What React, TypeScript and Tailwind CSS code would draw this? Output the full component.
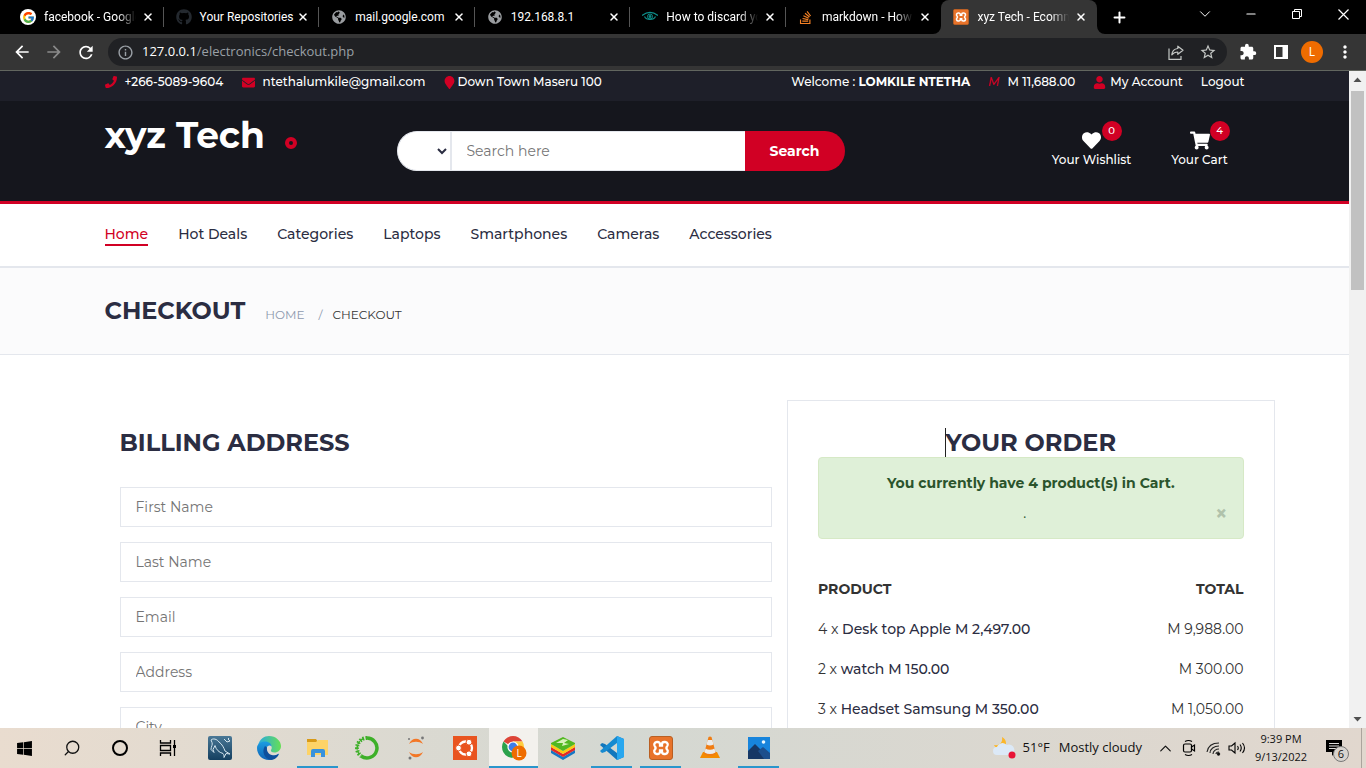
import React from "react";
import {
  FaEnvelope,
  FaGithub,
  FaGlobeAmericas,
  FaHeart,
  FaMapMarker,
  FaPhone,
  FaShoppingCart,
  FaStackOverflow,
  FaUser,
  FaWindows,
} from "react-icons/fa";
import { FcGoogle } from "react-icons/fc";
import { MdArrowBack, MdArrowForward, MdExtension, MdMoreVert, MdOutlineInfo, MdRefresh, MdStarBorder } from "react-icons/md";
import { ChevronDown, ChevronUp, Minus, Plus, Search, X } from "lucide-react";

function Xampp({ size }: { size: number }) {
  return (
    <svg width={size} height={size} viewBox="0 0 24 24" aria-hidden="true">
      <rect x="0.5" y="0.5" width="23" height="23" rx="2.5" fill="#e8732a" stroke="#b95f22" />
      <path
        d="M7.800 6h.9A2.300 2.300 0 0 1 11 8.300v1.200h2V8.300A2.300 2.300 0 0 1 15.300 6h.9a2.700 2.700 0 0 1 1.800 4.600 1.900 1.900 0 0 0 0 2.800 2.700 2.700 0 0 1-1.800 4.600h-.9a2.300 2.300 0 0 1-2.300-2.300v-1.200h-2v1.200A2.300 2.300 0 0 1 8.700 18h-.9A2.700 2.700 0 0 1 6 13.400a1.900 1.900 0 0 0 0-2.800A2.700 2.700 0 0 1 7.800 6Z"
        fill="none"
        stroke="#fff"
        strokeWidth="2.300"
      />
    </svg>
  );
}

function Eye() {
  return (
    <svg width="16" height="16" viewBox="0 0 16 16" fill="none" stroke="#0e8f8b" aria-hidden="true">
      <path d="M0 6.500c5-4 11-4 16 0M2.500 7.500c2 4 9 4 11 0" strokeWidth="1.200" />
      <circle cx="8" cy="7.500" r="2.500" strokeWidth="1" />
      <circle cx="8" cy="7.500" r="1" fill="#0e8f8b" />
    </svg>
  );
}

const tabs = [
  { title: "facebook - Google", fade: true, icon: <span className="flex size-4 items-center justify-center rounded-full bg-white"><FcGoogle size={13} /></span> },
  { title: "Your Repositories", icon: <FaGithub size={16} color="#24292f" /> },
  { title: "mail.google.com", icon: <FaGlobeAmericas size={14} color="#9a9da0" /> },
  { title: "192.168.8.1", icon: <FaGlobeAmericas size={14} color="#9a9da0" /> },
  { title: "How to discard your", fade: true, icon: <Eye /> },
  { title: "markdown - How to", fade: true, icon: <FaStackOverflow size={15} color="#f48024" /> },
  { title: "xyz Tech - Ecommerce", fade: true, icon: <Xampp size={16} />, active: true },
];

function TabStrip() {
  return (
    <div className="flex h-[34px] shrink-0 bg-black text-white">
      <div className="flex min-w-0 max-w-[1097px] flex-1 pl-2 font-[Roboto,sans-serif]">
        {tabs.map((tab, i) => (
          <div
            key={tab.title}
            className={
              tab.active
                ? "relative flex min-w-0 flex-1 items-center rounded-t-lg bg-[#353535] pr-2 pl-3"
                : "relative flex min-w-0 flex-1 items-center pr-2 pl-3"
            }
          >
            {i < 5 && <span className="absolute top-[7px] right-0 h-5 w-px bg-[#555]" />}
            {tab.active && (
              <>
                <svg className="absolute bottom-0 -left-2" width="8" height="8"><path d="M8 0v8H0a8 8 0 0 0 8-8Z" fill="#353535" /></svg>
                <svg className="absolute -right-2 bottom-0" width="8" height="8"><path d="M0 0v8h8a8 8 0 0 1-8-8Z" fill="#353535" /></svg>
              </>
            )}
            <span className="flex size-4 shrink-0 items-center justify-center">{tab.icon}</span>
            <span
              className={
                tab.fade
                  ? "ml-2 min-w-0 flex-1 overflow-hidden text-[12px] whitespace-nowrap [mask-image:linear-gradient(to_right,black_80%,transparent)]"
                  : "ml-2 min-w-0 flex-1 text-[12px] whitespace-nowrap"
              }
            >
              {tab.title}
            </span>
            <button aria-label="Close tab" className="ml-1 flex size-4 items-center justify-center">
              <X size={12} strokeWidth={3} />
            </button>
          </div>
        ))}
      </div>
      <button aria-label="New tab" className="flex w-11 items-center justify-center">
        <Plus size={17} strokeWidth={2.800} />
      </button>
      <div className="ml-auto flex pb-[6px]">
        <button aria-label="Search tabs" className="flex w-[46px] items-center justify-center"><ChevronDown size={18} strokeWidth={1.300} /></button>
        <button aria-label="Minimize" className="flex w-[46px] items-center justify-center"><Minus size={14} strokeWidth={2} /></button>
        <button aria-label="Restore" className="flex w-[46px] items-center justify-center">
          <svg width="10" height="10" fill="none" stroke="#fff"><path d="M.5 2.500h7v7h-7zM2.500 2.500v-2h7v7h-2" /></svg>
        </button>
        <button aria-label="Close" className="flex w-[46px] items-center justify-center">
          <svg width="11" height="11" stroke="#fff" strokeWidth="1.200"><path d="m.5.5 10 10m0-10-10 10" /></svg>
        </button>
      </div>
    </div>
  );
}

function Toolbar() {
  return (
    <div className="flex h-[37px] shrink-0 items-center border-b border-[#62665f] bg-[#353535] text-white">
      <button aria-label="Back" className="ml-3 flex w-5 justify-center"><MdArrowBack size={20} /></button>
      <button aria-label="Forward" className="ml-3 flex w-5 justify-center text-[#8a8a8a]"><MdArrowForward size={20} /></button>
      <button aria-label="Reload" className="ml-3 flex w-5 justify-center"><MdRefresh size={21} /></button>
      <div className="ml-3 flex h-7 min-w-0 flex-1 items-center rounded-full bg-[#202124] pr-[3px] pl-[9px]">
        <MdOutlineInfo size={17} color="#9aa0a6" />
        <a href="#page" className="ml-2 flex-1 text-[13px] text-[#9aa0a6]">
          <span className="text-white">127.0.0.1</span>/electronics/checkout.php
        </a>
        <button aria-label="Share" className="flex w-8 justify-center">
          <svg width="16" height="15" viewBox="0 0 16 15" fill="none" stroke="#c4c7c5" strokeWidth="1.200">
            <path d="M1 3.500v10.800h12V11" />
            <path d="M9.800 1.200 15 5.300 9.800 9.300V7C7 7 5.300 7.800 3.800 9.800c.3-3.500 2.300-5.900 6-6.300Z" strokeLinejoin="round" />
          </svg>
        </button>
        <button aria-label="Bookmark" className="flex w-8 justify-center text-[#c4c7c5]"><MdStarBorder size={18} /></button>
      </div>
      <button aria-label="Extensions" className="flex w-[38px] justify-center pl-1"><MdExtension size={18} /></button>
      <button aria-label="Side panel" className="flex w-8 justify-center">
        <svg width="14" height="14" fill="none" stroke="#fff" strokeWidth="2"><path d="M1 1h12v12H1z" /><path d="M10.500 1v12" strokeWidth="4" /></svg>
      </button>
      <button aria-label="Profile" className="ml-1 flex size-[22px] items-center justify-center rounded-full bg-[#ef6c00] text-[12px]">L</button>
      <button aria-label="Menu" className="flex w-[43px] justify-center"><MdMoreVert size={20} /></button>
    </div>
  );
}

function TopBar() {
  return (
    <div className="bg-[#1e1f29] text-[12px] leading-[22px] font-medium text-white">
      <div className="mx-auto flex max-w-[1170px] justify-between px-[15px] pb-2">
        <ul className="flex">
          <li className="flex w-[137px] items-center"><FaPhone className="mr-2 text-[#d10024]" size={12} /><a href="#phone">+266-5089-9604</a></li>
          <li className="flex w-[201px] items-center"><FaEnvelope className="mr-2 text-[#d10024]" size={13} /><a href="#mail">ntethalumkile@gmail.com</a></li>
          <li className="flex items-center"><FaMapMarker className="mr-[2px] text-[#d10024]" size={13} /><a href="#map">Down Town Maseru 100</a></li>
        </ul>
        <ul className="flex gap-[18px]">
          <li>Welcome : <b>LOMKILE NTETHA</b></li>
          <li><i className="mr-2 text-[#d10024]">M</i>M 11,688.00</li>
          <li><a href="#account" className="flex items-center"><FaUser className="mr-1 text-[#d10024]" size={13} />My Account</a></li>
          <li><a href="#logout">Logout</a></li>
        </ul>
      </div>
    </div>
  );
}

function HeaderLink({ label, count, children }: { label: string; count: number; children: React.ReactNode }) {
  return (
    <a href="#shop" className="relative flex w-[90px] flex-col items-center text-[12px] leading-[18px] font-medium text-white">
      {children}
      <span className="mt-px">{label}</span>
      <span className="absolute -top-[10px] left-[55px] flex size-5 items-center justify-center rounded-full bg-[#d10024] text-[10px]">{count}</span>
    </a>
  );
}

function Header() {
  return (
    <header className="bg-[#15161d]">
      <div className="mx-auto flex h-[100px] max-w-[1170px] items-start px-[15px]">
        <a href="#home" className="flex w-[292px] items-center pt-[9px] text-[36px] leading-[50px] font-bold text-white">
          xyz Tech
          <span className="mt-4 ml-5 size-3 rounded-full border-4 border-[#d10024]" />
        </a>
        <form className="mt-[30px] flex h-10 w-[448px] text-[14px]">
          <select aria-label="Category" className="w-[55px] rounded-l-full border border-r-2 border-[#e4e7ed] bg-white pl-8 text-[#2b2d42]"><option> </option></select>
          <input aria-label="Search" placeholder="Search here" className="w-0 flex-1 border-y border-[#e4e7ed] bg-white px-[15px] placeholder:text-[#757575]" />
          <button type="button" className="w-[100px] rounded-r-full bg-[#d10024] font-bold text-white">Search</button>
        </form>
        <div className="mt-[30px] ml-auto flex gap-[18px]">
          <HeaderLink label="Your Wishlist" count={0}><FaHeart size={19} /></HeaderLink>
          <HeaderLink label="Your Cart" count={4}><FaShoppingCart size={20} className="h-[19px]" /></HeaderLink>
        </div>
      </div>
    </header>
  );
}

const links = ["Home", "Hot Deals", "Categories", "Laptops", "Smartphones", "Cameras", "Accessories"];

function Nav() {
  return (
    <nav className="border-t-[3px] border-b-2 border-t-[#d10024] border-b-[#e4e7ed] bg-white">
      <ul className="mx-auto flex max-w-[1170px] gap-[30px] px-[15px] pt-5 pb-5 text-[14px] leading-5 font-medium">
        {links.map((link, i) => (
          <li key={link}>
            <a href="#nav" className={i === 0 ? "block border-b-2 border-[#d10024] text-[#d10024]" : "block border-b-2 border-transparent text-[#2b2d42]"}>{link}</a>
          </li>
        ))}
      </ul>
    </nav>
  );
}

function Breadcrumb() {
  return (
    <div className="border-b border-[#e4e7ed] bg-[#fbfbfc]">
      <div className="mx-auto flex h-[86px] max-w-[1170px] items-baseline px-[15px] pt-[28px]">
        <h3 className="text-[24px] leading-[30px] font-bold text-[#2b2d42]">CHECKOUT</h3>
        <ul className="ml-5 flex text-[12px] text-[#8d99ae]">
          <li><a href="#home">HOME</a></li>
          <li className="mr-[10px] ml-[14px]">/</li>
          <li className="text-[#333]">CHECKOUT</li>
        </ul>
      </div>
    </div>
  );
}

const fields = ["First Name", "Last Name", "Email", "Address", "City"];
const items = [
  { qty: 4, name: "Desk top Apple M 2,497.00", total: "M 9,988.00" },
  { qty: 2, name: "watch M 150.00", total: "M 300.00" },
  { qty: 3, name: "Headset Samsung M 350.00", total: "M 1,050.00" },
];

function Checkout() {
  return (
    <main className="mx-auto max-w-[1170px] pt-[45px] text-[14px] text-[#333]">
      <div className="-mr-[15px] ml-[15px] flex">
        <form className="w-7/12 px-[15px] pt-[30px]">
          <h3 className="mb-8 text-[24px] leading-[25px] font-bold text-[#2b2d42]">BILLING ADDRESS</h3>
          {fields.map((field) => (
            <input key={field} aria-label={field} placeholder={field} className="mb-[15px] block h-10 w-full border border-[#e4e7ed] bg-white px-[15px] placeholder:text-[#757575]" />
          ))}
        </form>
        <section className="w-5/12 border border-b-0 border-[#e4e7ed] px-[30px] pt-[29px]">
          <h3 className="mb-[2px] flex justify-center text-[24px] leading-[25px] font-bold text-[#2b2d42]">
            <span className="relative">
              <span className="absolute -top-[2px] left-0 h-[29px] w-px bg-[#222]" />
              YOUR ORDER
            </span>
          </h3>
          <div className="relative mb-[30px] rounded border border-[#d6e9c6] bg-[#dff0d8] py-[15px] text-center leading-5 text-[#2b542c]">
            <p className="font-bold">You currently have 4 product(s) in Cart.</p>
            <p className="mt-[10px] pr-3">.</p>
            <button aria-label="Dismiss" className="absolute right-[15px] bottom-[14px] text-[21px] font-bold text-[#b0c2ab]">×</button>
          </div>
          <table className="w-full leading-5">
            <thead>
              <tr><th className="py-[10px] text-left font-bold">PRODUCT</th><th className="py-[10px] text-right font-bold">TOTAL</th></tr>
            </thead>
            <tbody>
              {items.map((item) => (
                <tr key={item.name}>
                  <td className="py-[10px]">{item.qty} x <a href="#item" className="font-medium text-[#2b2d42]">{item.name}</a></td>
                  <td className="py-[10px] text-right">{item.total}</td>
                </tr>
              ))}
            </tbody>
          </table>
        </section>
      </div>
    </main>
  );
}

function ScrollBar() {
  return (
    <div className="flex w-[17px] shrink-0 flex-col items-center bg-[#f1f1f1]">
      <svg width="17" height="20"><path d="M4.500 11h8l-4-4.500Z" fill="#505050" /></svg>
      <div className="h-[199px] w-[13px] bg-[#c1c1c1]" />
      <svg className="mt-auto" width="17" height="17"><path d="M4.500 6h8l-4 4.500Z" fill="#505050" /></svg>
    </div>
  );
}

const apps: { name: string; state?: "open" | "active"; icon: React.ReactNode }[] = [
  {
    name: "MySQL Workbench",
    icon: (
      <svg width="24" height="24" viewBox="0 0 24 24">
        <defs><linearGradient id="sql" x2="0" y2="1"><stop stopColor="#4a7896" /><stop offset="1" stopColor="#143f60" /></linearGradient></defs>
        <rect width="24" height="24" rx="2" fill="url(#sql)" />
        <path d="M3 4c2-2 6-1 8 2 3 2 5 6 6 9l5 3-4-.5-2 4c0-2 0-3-1-4-4-1-7-4-8-8l-2 4 1 3-3-3c0-3 2-5 1-7ZM16 3l3 3 3-1-2-2 1-1" fill="none" stroke="#d3e4ee" strokeWidth="1" />
      </svg>
    ),
  },
  {
    name: "Edge",
    icon: (
      <svg width="24" height="24" viewBox="0 0 24 24">
        <defs>
          <linearGradient id="edge1"><stop stopColor="#28a9e1" /><stop offset="1" stopColor="#66df55" /></linearGradient>
          <linearGradient id="edge2" x2="0" y2="1"><stop stopColor="#1b9de2" /><stop offset="1" stopColor="#1262b4" /></linearGradient>
        </defs>
        <path d="M1 9C3 3 7 0 12 0c7 0 12 5 12 10 0 4-3 6.500-6.500 6.500-3 0-4-1.500-3.500-2.500 2-2.500 0-7-5-7-3 0-6 1-8 2Z" fill="url(#edge1)" />
        <path d="M0 12c0-4 4-6.500 8-6.500 4 0 6.500 2.500 6.500 5-1-1.500-3-1.500-4.500.5-3 4 2 11 9 8l3-1.500C20 21 16.500 24 12 24 5 24 0 18.500 0 12Z" fill="url(#edge2)" />
        <path d="M8 10c-4 6 0 13 6 14 3 0 7-3 8-6-6 3.500-13 0-12-6.500Z" fill="#0e4f9c" />
      </svg>
    ),
  },
  {
    name: "File Explorer",
    state: "open",
    icon: (
      <svg width="24" height="22" viewBox="0 0 24 22">
        <path d="M1 2h9l2 3H1Z" fill="#d89a17" />
        <path d="M1 5h9l2-2h10v15H1Z" fill="#fdd367" />
        <path d="M5 20v-6q0-2 2-2h10q2 0 2 2v6h-4v-4H9v4Z" fill="#3992dc" />
      </svg>
    ),
  },
  {
    name: "Anaconda",
    icon: (
      <svg width="26" height="26" viewBox="0 0 26 26" fill="none" stroke="#3eb029">
        <path d="M12 3a10 10 0 1 1-5 18" strokeWidth="3.500" />
        <path d="M13 3A10 10 0 0 0 7 21" strokeWidth="4" strokeDasharray="1.500 1.500" />
        <path d="M10 3.500A10 10 0 0 0 6 20" strokeWidth="1.500" strokeDasharray="4 1" />
      </svg>
    ),
  },
  {
    name: "Jupyter",
    icon: (
      <svg width="18" height="24" viewBox="0 0 18 24">
        <path d="M2 8c3-7 11-7 14 0-4-3-10-3-14 0ZM2 16c3 7 11 7 14 0-4 3-10 3-14 0Z" fill="#f37726" />
        <circle cx="15.500" cy="2" r="1.400" fill="#767677" /><circle cx="2" cy="3" r="1" fill="#767677" /><circle cx="3" cy="22" r="1.500" fill="#767677" />
      </svg>
    ),
  },
  {
    name: "Ubuntu",
    icon: (
      <svg width="24" height="24" viewBox="0 0 24 24">
        <path d="M0 0h24v24H0z" fill="#e95420" />
        <circle cx="12.500" cy="12" r="6.500" fill="none" stroke="#fff" strokeWidth="2.300" />
        <g fill="#fff" stroke="#e95420"><circle cx="5.500" cy="12" r="2.900" /><circle cx="16" cy="6.200" r="2.900" /><circle cx="16" cy="17.800" r="2.900" /></g>
      </svg>
    ),
  },
  {
    name: "Chrome",
    state: "active",
    icon: (
      <svg width="26" height="26" viewBox="0 0 26 26">
        <path d="M12 12 2.500 6.500A11 11 0 0 1 21.500 6.500H12Z" fill="#dd4437" />
        <path d="M12 12H8L2.500 6.500a11 11 0 0 0 9 16.500l4-8Z" fill="#2ba24c" />
        <path d="M12 6.500h9.500a11 11 0 0 1-10 16.500L17 14Z" fill="#ffcd40" />
        <circle cx="12" cy="12" r="5.600" fill="#fff" /><circle cx="12" cy="12" r="4.400" fill="#3e7de8" />
        <circle cx="18" cy="18" r="7.500" fill="#ef6c00" />
        <text x="18" y="21.500" textAnchor="middle" fontSize="10" fill="#fff">L</text>
      </svg>
    ),
  },
  {
    name: "BlueStacks",
    icon: (
      <svg width="26" height="24" viewBox="0 0 26 24">
        <path d="m1 14 12 7 12-7v3l-12 7-12-7Z" fill="#1677c5" />
        <path d="m1 11 12 7 12-7v3l-12 7-12-7Z" fill="#e22929" />
        <path d="m1 8 12 7 12-7v3l-12 7-12-7Z" fill="#fcca13" />
        <path d="m1 7 12-6 12 6v1l-12 7L1 8Z" fill="#51b821" />
        <path d="m6 7 7-4 5 1-4 3 5 1-7 2 1-3Z" fill="#d8f2bb" />
      </svg>
    ),
  },
  {
    name: "Visual Studio Code",
    state: "open",
    icon: (
      <svg width="24" height="24" viewBox="0 0 24 24">
        <path d="m17 0 7 3v18l-7 3L0 9l2-2 3 1 12 9Z" fill="#1177bd" />
        <path d="M17 0v7L5 16l-3 1-2-2Z" fill="#168ad0" />
        <path d="m17 0 7 3v18l-7 3Z" fill="#28a7ef" />
      </svg>
    ),
  },
  { name: "XAMPP", state: "open", icon: <Xampp size={24} /> },
  {
    name: "VLC",
    icon: (
      <svg width="20" height="24" viewBox="0 0 20 24">
        <path d="m3 16-3 6h20l-3-6Z" fill="#f48b00" />
        <path d="M8.500 1q1.500-1 3 0L16 18q-6 4-12 0Z" fill="#f07c13" />
        <path d="M7.700 4h4.600l1.200 4.500q-3.500 2-7 0ZM5.500 12.500q4.500 2.500 9 0l1 4q-5.500 3-11 0Z" fill="#ebebeb" />
      </svg>
    ),
  },
  {
    name: "Photos",
    state: "open",
    icon: (
      <svg width="22" height="22" viewBox="0 0 22 22">
        <path d="M0 0h22v22H0z" fill="#1784dc" />
        <path d="m0 14 7-7 15 15H0Z" fill="#163765" /><path d="m10 14 5-4 7 6v6h-6Z" fill="#1d4f8c" /><circle cx="15.500" cy="5" r="1.800" fill="#e8f7ff" />
      </svg>
    ),
  },
];

function Taskbar() {
  return (
    <footer className="flex h-10 shrink-0 bg-linear-to-r from-[#e9dccf] via-[#d4d8d2] via-45% to-[#e1d7ce] text-[#111]">
      <button aria-label="Start" className="flex w-12 items-center justify-center"><FaWindows size={17} color="#000" /></button>
      <button aria-label="Search" className="flex w-12 items-center justify-center"><Search size={18} strokeWidth={1.700} className="-scale-x-100" /></button>
      <button aria-label="Cortana" className="flex w-12 items-center justify-center"><span className="size-4 rounded-full border-2 border-black" /></button>
      <button aria-label="Task view" className="flex w-[51px] items-center justify-center pr-1">
        <svg width="18" height="16" fill="none" stroke="#000" strokeWidth="1.300"><path d="M1.500 0v3h10V0M1.500 16v-3h10v3M1.500 5.500h10v5h-10zM15.500 0v16" /><path d="M14 5h3v3h-3z" fill="#000" stroke="none" /></svg>
      </button>
      {apps.map((app) => (
        <button
          key={app.name}
          aria-label={app.name}
          className={app.state === "active" ? "relative flex w-[49px] items-center justify-center bg-[#f3f1ed]" : "relative flex w-[49px] items-center justify-center"}
        >
          {app.icon}
          {app.state && <span className={app.state === "active" ? "absolute inset-x-0 bottom-0 h-[2px] bg-[#2a96cc]" : "absolute inset-x-1 bottom-0 h-[2px] bg-[#2a96cc]"} />}
        </button>
      ))}
      <div className="ml-auto flex items-center">
        <button className="mr-3 flex items-center text-[13px] whitespace-nowrap">
          <svg className="mr-[6px]" width="25" height="24">
            <path d="M10 1c1 5-2 9-8 8 3 6 12 4 12-2 0-3-2-5-4-6Z" fill="#fbb72c" />
            <path d="M5 19a4 4 0 0 1 0-8 6 6 0 0 1 10-2 5 5 0 0 1 4 10Z" fill="#dce9f7" />
            <circle cx="20" cy="19" r="3.500" fill="#e81335" />
          </svg>
          51°F<span className="ml-[9px]">Mostly cloudy</span>
        </button>
        <button aria-label="Hidden icons" className="flex w-[22px] justify-center"><ChevronUp size={19} strokeWidth={1.500} /></button>
        <button aria-label="Camera" className="flex w-[26px] justify-center">
          <svg width="14" height="18" fill="none" stroke="#000" strokeWidth="1.200"><path d="M3 2.500q3.500-2 7 0M3 15.500q3.500 2 7 0" /><rect x="1.500" y="5" width="8" height="8" rx="1.500" /><path d="m9.500 8 3-2v6l-3-2Z" /></svg>
        </button>
        <button aria-label="Network" className="flex w-[23px] justify-center">
          <svg width="15" height="15" fill="none" stroke="#222" strokeWidth="1.100"><path d="M1 11C2 5 6 2 13 2M4 12c0-4 4-7 9-7M7 13c0-3 3-5 6-5M10 13c0-1 1-2 3-2" /><circle cx="12.500" cy="13" r="1.200" fill="#000" /></svg>
        </button>
        <button aria-label="Volume" className="flex w-[23px] justify-center">
          <svg width="18" height="14" fill="none" stroke="#000" strokeWidth="1.100"><path d="M1 5h2.500L7 2v10L3.500 9H1ZM9.500 5q1.500 2 0 4M12 3.500q2.500 3.500 0 7M14.500 2q4 5 0 10" /></svg>
        </button>
        <div className="w-[66px] text-center text-[11px] leading-[18px] whitespace-nowrap"><p>9:39 PM</p><p>9/13/2022</p></div>
        <button aria-label="Notifications" className="relative flex w-[47px] justify-center pr-2">
          <svg width="16" height="16"><path d="M0 0h16v12H9l-3 4v-4H0Z" fill="#000" /><path d="M3 3.500h10M3 6h10M3 8.500h7" stroke="#ddd" /></svg>
          <span className="absolute top-[6px] left-[19px] flex size-4 items-center justify-center rounded-full border border-[#777] bg-[#d8d4cf] text-[11px]">6</span>
        </button>
        <span className="mr-1 h-10 w-px bg-[#aba49d]" />
      </div>
    </footer>
  );
}

export default function App() {
  return (
    <div className="flex h-screen flex-col overflow-hidden font-['Open_Sans','Noto_Sans',sans-serif]">
      <TabStrip />
      <Toolbar />
      <div className="flex min-h-0 flex-1">
        <div id="page" className="min-w-0 flex-1 overflow-hidden bg-white font-['Montserrat','Inter',sans-serif]">
          <TopBar />
          <Header />
          <Nav />
          <Breadcrumb />
          <Checkout />
        </div>
        <ScrollBar />
      </div>
      <Taskbar />
    </div>
  );
}
